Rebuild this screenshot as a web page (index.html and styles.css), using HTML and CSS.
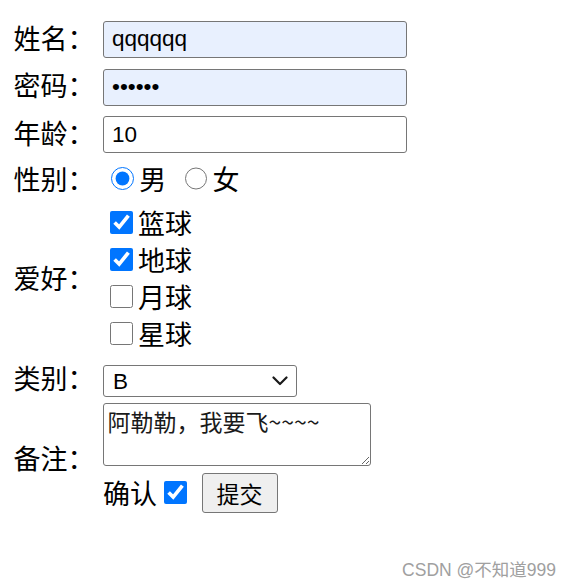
FILE: index.html
```html
<!DOCTYPE html>
<html lang="zh-CN">
<head>
<meta charset="utf-8">
<title>表单</title>
<link rel="stylesheet" href="styles.css">
</head>
<body>
<form class="form">
  <table class="form-table">
    <tr>
      <td class="label">姓名：</td>
      <td class="cell"><input class="field autofill" type="text" value="qqqqqq"></td>
    </tr>
    <tr>
      <td class="label">密码：</td>
      <td class="cell"><input class="field autofill" type="password" value="qqqqqq"></td>
    </tr>
    <tr>
      <td class="label">年龄：</td>
      <td class="cell"><input class="field" type="text" value="10"></td>
    </tr>
    <tr>
      <td class="label">性别：</td>
      <td class="cell gender">
        <label class="opt"><input class="radio" type="radio" name="sex" checked>男</label>
        <label class="opt opt-second"><input class="radio" type="radio" name="sex">女</label>
      </td>
    </tr>
    <tr>
      <td class="label">爱好：</td>
      <td class="cell hobbies">
        <label class="line"><input class="check" type="checkbox" checked>篮球</label>
        <label class="line"><input class="check" type="checkbox" checked>地球</label>
        <label class="line"><input class="check" type="checkbox">月球</label>
        <label class="line"><input class="check" type="checkbox">星球</label>
      </td>
    </tr>
    <tr>
      <td class="label">类别：</td>
      <td class="cell">
        <span class="select-wrap">
          <select class="select">
            <option>A</option>
            <option selected>B</option>
            <option>C</option>
          </select>
          <svg class="chevron" width="16" height="10" viewBox="0 0 16 10" aria-hidden="true">
            <path d="M1.5 1.5 L8 8 L14.5 1.5" fill="none" stroke="#1a1a1a" stroke-width="2.2" stroke-linecap="round" stroke-linejoin="round"/>
          </svg>
        </span>
      </td>
    </tr>
    <tr>
      <td class="label" rowspan="2">备注：</td>
      <td class="cell"><textarea class="note">阿勒勒，我要飞~~~~</textarea></td>
    </tr>
    <tr>
      <td class="cell confirm">
        <span>确认</span><input class="check" type="checkbox" checked><button class="submit" type="button">提交</button>
      </td>
    </tr>
  </table>
</form>
<div class="watermark">CSDN @不知道999</div>
</body>
</html>
```

FILE: styles.css
```css
html, body {
  margin: 0;
  padding: 0;
  background: #ffffff;
}

body {
  font-family: "Noto Sans CJK SC", "Microsoft YaHei", sans-serif;
  font-size: 27px;
  line-height: 37.5px;
  color: #000000;
}

.form {
  padding: 12px 0 0 8.75px;
}

.form-table {
  border-collapse: separate;
  border-spacing: 3.5px;
}

.form-table td {
  padding: 1.75px;
}

.label {
  width: 83px;
  white-space: nowrap;
  vertical-align: middle;
}

.cell {
  vertical-align: middle;
}

.field {
  box-sizing: border-box;
  width: 304px;
  height: 37px;
  margin: 0;
  padding: 0 8px;
  border: 1px solid #767676;
  border-radius: 3px;
  font-family: "Liberation Sans", Arial, sans-serif;
  font-size: 22.5px;
  color: #000000;
  background: #ffffff;
  vertical-align: middle;
}

.autofill {
  background: #e8f0fe;
}

.gender {
  white-space: nowrap;
}

.opt {
  display: inline-flex;
  align-items: center;
}

.opt-second {
  margin-left: 4px;
}

.radio {
  width: 22.75px;
  height: 22.75px;
  margin: 0 5.25px 0 8.25px;
  accent-color: #0075ff;
}

.line {
  display: flex;
  align-items: center;
  height: 37px;
}

.check {
  width: 22.75px;
  height: 22.75px;
  margin: 0 5.25px 0 7px;
  accent-color: #0075ff;
}

.select-wrap {
  position: relative;
  display: inline-block;
  vertical-align: middle;
}

.select {
  box-sizing: border-box;
  display: block;
  width: 194px;
  height: 31.5px;
  margin: 0;
  padding: 0 30px 0 9px;
  border: 1px solid #767676;
  border-radius: 3px;
  font-family: "Liberation Sans", Arial, sans-serif;
  font-size: 22.5px;
  color: #000000;
  background: #ffffff;
  appearance: none;
  -webkit-appearance: none;
}

.chevron {
  position: absolute;
  right: 9px;
  top: 11px;
  pointer-events: none;
}

.note {
  box-sizing: border-box;
  display: block;
  width: 268px;
  height: 63px;
  margin: 0;
  padding: 3.5px;
  border: 1px solid #767676;
  border-radius: 3px;
  font-family: "Noto Sans CJK SC", monospace;
  font-size: 23px;
  line-height: 26px;
  color: #1a1a1a;
  resize: both;
}

.confirm {
  display: flex;
  align-items: center;
}

.confirm .check {
  margin: 0 5.25px 0 7px;
}

.submit {
  box-sizing: border-box;
  height: 40px;
  margin-left: 9.5px;
  padding: 0 14px;
  border: 1px solid #767676;
  border-radius: 3px;
  background: #efefef;
  font-family: "Noto Sans CJK SC", sans-serif;
  font-size: 23px;
  line-height: 36px;
  color: #000000;
}

.watermark {
  position: absolute;
  right: 14px;
  bottom: 7px;
  font-family: "Liberation Sans", "Noto Sans CJK SC", sans-serif;
  font-size: 17.5px;
  line-height: 22px;
  color: #a0a0a0;
}
```
